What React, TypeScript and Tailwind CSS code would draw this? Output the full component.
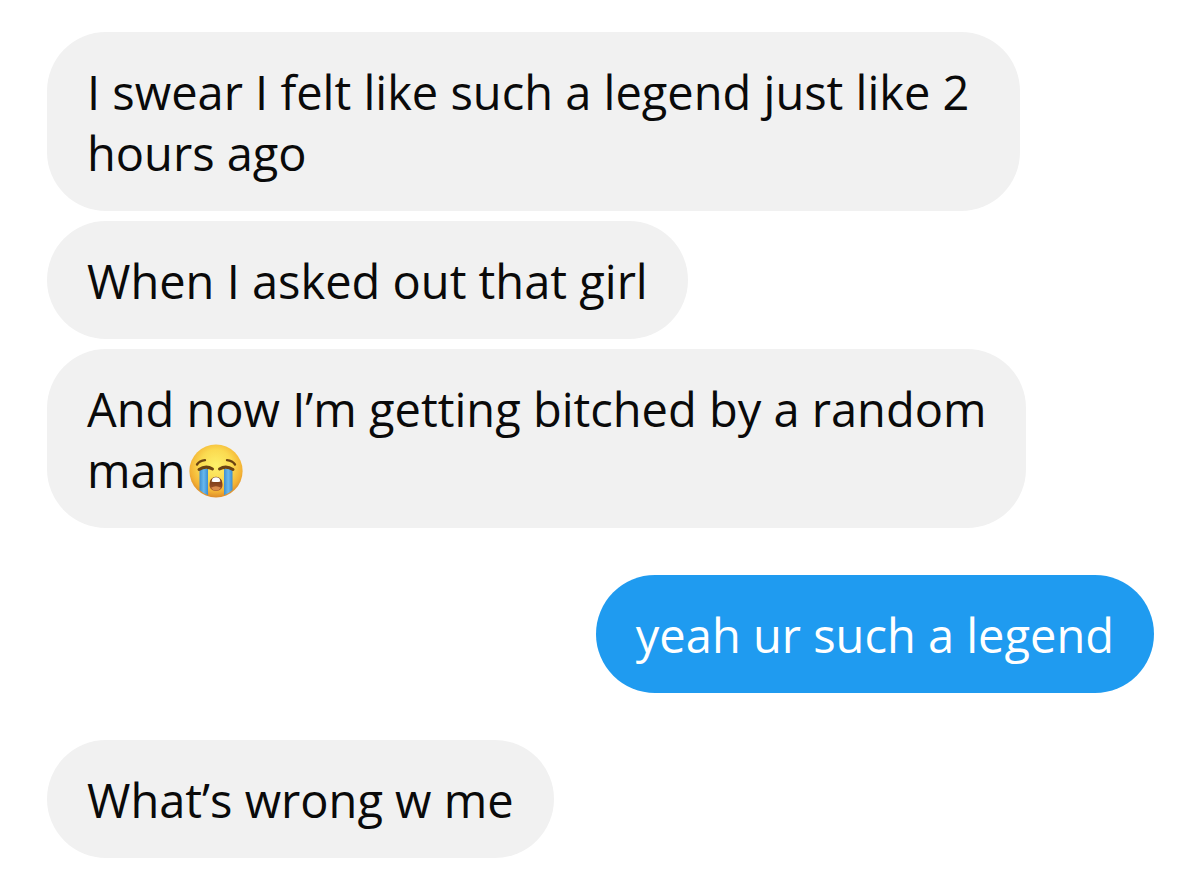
import type { ReactNode } from "react";

function SobbingFace() {
  return (
    <svg
      role="img"
      aria-label="Loudly crying face"
      viewBox="0 0 54 54"
      className="ml-1 inline-block size-[54px] align-[-10px]"
    >
      <defs>
        <radialGradient id="face" cx="50%" cy="40%" r="60%">
          <stop offset="0" stopColor="#fdf06a" />
          <stop offset="0.5" stopColor="#fbda50" />
          <stop offset="0.82" stopColor="#f3b234" />
          <stop offset="1" stopColor="#dd8a28" />
        </radialGradient>
        <linearGradient id="tear" x1="0" y1="0" x2="1" y2="0">
          <stop offset="0" stopColor="#3f8fd0" />
          <stop offset="0.5" stopColor="#68b8ee" />
          <stop offset="1" stopColor="#3b8dd2" />
        </linearGradient>
        <linearGradient id="mouth" x1="0" y1="0" x2="0" y2="1">
          <stop offset="0" stopColor="#6b3212" />
          <stop offset="1" stopColor="#a5562a" />
        </linearGradient>
      </defs>
      <circle cx="27" cy="27" r="26.6" fill="url(#face)" />
      <path d="M10.500 25h8.500v26.200q-4.800-1.700-8.500-5.200z" fill="url(#tear)" />
      <path d="M35 25h8.500v21q-3.700 3.500-8.500 5.200z" fill="url(#tear)" />
      <g fill="none" stroke="#6b4212" strokeLinecap="round">
        <path d="M8 20.500q2.500-3.800 8-4.300" strokeWidth="2.300" />
        <path d="M46 20.500q-2.500-3.800-8-4.300" strokeWidth="2.300" />
        <path d="M10 25.500q7-4.500 13.500-.5" strokeWidth="3" />
        <path d="M30.500 25q6.500-4 13.500.5" strokeWidth="3" />
      </g>
      <path
        d="M27 32.800c4.300 0 6.500 3.700 6.500 8 0 3.900-2.700 6.200-6.500 6.200s-6.500-2.300-6.500-6.200c0-4.300 2.200-8 6.500-8z"
        fill="url(#mouth)"
      />
      <path d="M23.500 34.500q3.500-2.500 7 0l1 3q-4.500 1-9 0z" fill="#fff" />
      <path d="M22 43.800q5-3.300 10 0-1.600 2.700-5 2.700t-5-2.700z" fill="#d98a4c" />
    </svg>
  );
}

function Bubble({
  sent = false,
  className = "",
  children,
}: {
  sent?: boolean;
  className?: string;
  children: ReactNode;
}) {
  const tone = sent ? "self-end bg-[#1f9bf0] text-white" : "self-start bg-[#f1f1f1] text-[#0a0a0a]";
  return (
    <li
      className={`max-w-full rounded-[59px] px-10 pt-[30px] pb-[27px] ${tone} ${className}`}
    >
      <p>{children}</p>
    </li>
  );
}

export default function App() {
  return (
    <main className='min-h-screen bg-white pt-8 pr-[46px] pb-[38px] pl-[47px] font-["Open_Sans",sans-serif] text-[47px] leading-[61px] font-[450]'>
      <ul className="flex flex-col gap-[47px]">
        <li>
          <ul className="flex flex-col gap-[10px]">
            <Bubble className="w-[973px]">
              I swear I felt like such a legend just like 2 hours ago
            </Bubble>
            <Bubble>When I asked out that girl</Bubble>
            <Bubble className="w-[979px] pr-6">
              And now I’m getting bitched by a random man
              <SobbingFace />
            </Bubble>
          </ul>
        </li>
        <Bubble sent>yeah ur such a legend</Bubble>
        <Bubble>What’s wrong w me</Bubble>
      </ul>
    </main>
  );
}
